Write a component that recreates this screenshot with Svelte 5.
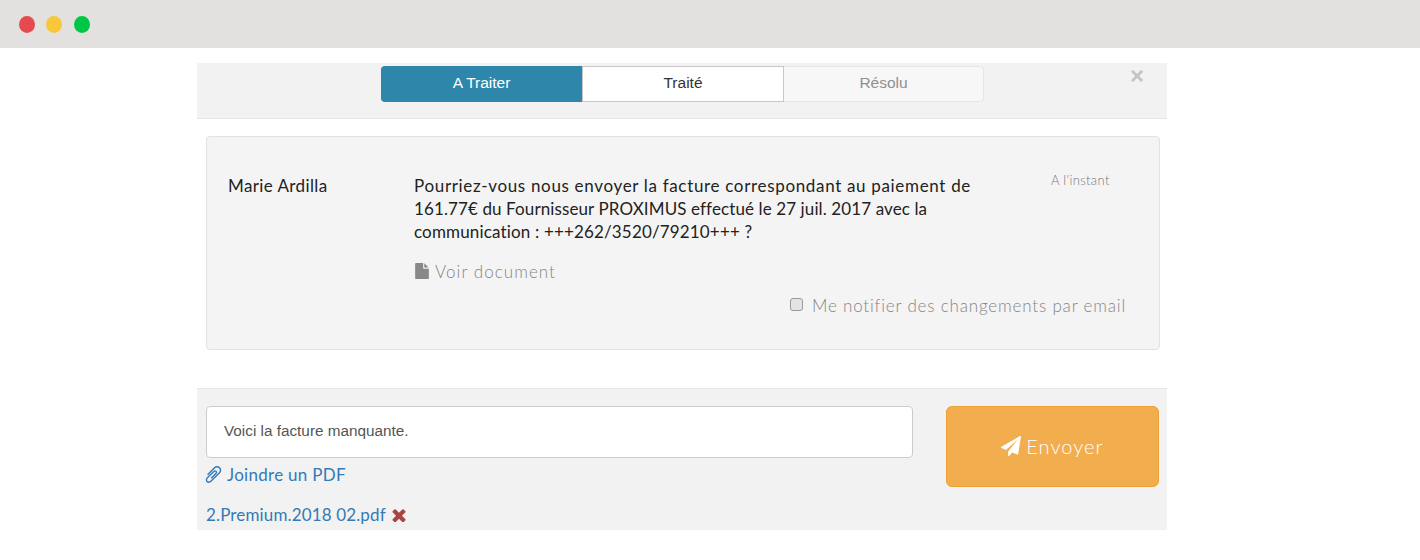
<script>
  const tabs = [
    { label: "A Traiter", kind: "active" },
    { label: "Traité", kind: "current" },
    { label: "Résolu", kind: "muted" },
  ];
  let reply = "Voici la facture manquante.";
  let notify = false;
</script>

<div class="titlebar">
  <span class="dot red"></span>
  <span class="dot yellow"></span>
  <span class="dot green"></span>
</div>

<main class="panel">
  <header class="head">
    <div class="tabs">
      {#each tabs as tab}
        <button class="tab {tab.kind}">{tab.label}</button>
      {/each}
    </div>
    <span class="close">×</span>
  </header>

  <section class="card">
    <div class="name">Marie Ardilla</div>
    <div class="body">
      <p class="msg">
        <span class="line1">Pourriez-vous nous envoyer la facture correspondant au paiement de</span>
        <span class="line2">161.77€ du Fournisseur PROXIMUS effectué le 27 juil. 2017 avec la</span>
        <span class="line3">communication : +++262/3520/79210+++ ?</span>
      </p>
      <div class="doc">
        <svg class="doc-icon" viewBox="128 0 1536 1792"><path d="M1152 512v-472q22 14 36 28l408 408q14 14 28 36h-472zm-128 32q0 40 28 68t68 28h544v1056q0 40-28 68t-68 28h-1344q-40 0-68-28t-28-68v-1600q0-40 28-68t68-28h800v544z" /></svg>
        Voir document
      </div>
    </div>
    <div class="time">A l'instant</div>
    <label class="notify">
      <input type="checkbox" bind:checked={notify} />
      <span>Me notifier des changements par email</span>
    </label>
  </section>

  <footer class="foot">
    <div class="left">
      <input class="reply" type="text" bind:value={reply} />
      <div class="attach">
        <svg class="clip" viewBox="128 128 1536 1536"><path transform="matrix(-1 0 0 1 1792 0)" d="M1596 1385q0 117-79 196t-196 79q-135 0-235-100l-777-776q-113-115-113-271 0-159 110-270t269-111q158 0 273 113l605 606q10 10 10 22 0 16-30.5 46.5t-46.5 30.5q-13 0-23-10l-606-607q-79-77-181-77-106 0-179 75t-73 181q0 105 76 181l776 777q63 63 145 63 64 0 106-42t42-106q0-82-63-145l-581-581q-26-24-60-24-29 0-48 19t-19 48q0 32 25 59l410 410q10 10 10 22 0 16-31 47t-47 31q-12 0-22-10l-410-410q-63-61-63-149 0-82 57-139t139-57q88 0 149 63l581 581q100 98 100 235z" /></svg>
        Joindre un PDF
      </div>
      <div class="file">
        2.Premium.2018 02.pdf
        <svg class="remove" viewBox="256 256 1280 1280"><path d="M1490 1322q0 40-28 68l-136 136q-28 28-68 28t-68-28l-294-294-294 294q-28 28-68 28t-68-28l-136-136q-28-28-28-68t28-68l294-294-294-294q-28-28-28-68t28-68l136-136q28-28 68-28t68 28l294 294 294-294q28-28 68-28t68 28l136 136q28 28 28 68t-28 68l-294 294 294 294q28 28 28 68z" /></svg>
      </div>
    </div>
    <button class="send">
      <svg class="plane" viewBox="0 0 1792 1792"><path d="M1764 11q33 24 27 64l-256 1536q-5 29-32 45-14 8-31 8-11 0-24-5l-453-185-242 295q-18 23-49 23-13 0-22-4-19-7-30.5-23.5t-11.5-36.5v-349l864-1059-1069 925-395-162q-37-14-40-55-2-40 32-59l1664-960q15-9 32-9 20 0 36 11z" /></svg>
      Envoyer
    </button>
  </footer>
</main>

<style>
  :global(body) {
    background: #fff;
    font-family: "Lato", "Open Sans", sans-serif;
  }

  .titlebar {
    height: 48px;
    background: #e2e1df;
    display: flex;
    align-items: center;
    padding-left: 19px;
    gap: 11px;
  }

  .dot {
    width: 16px;
    height: 17px;
    border-radius: 50%;
  }
  .red { background: #e54b4e; }
  .yellow { background: #f9c73c; }
  .green { background: #00c647; margin-left: 1px; }

  .panel {
    width: 970px;
    margin: 15px 0 0 197px;
  }

  .head {
    position: relative;
    height: 56px;
    box-sizing: border-box;
    padding-top: 3px;
    background: #f2f2f2;
    border-bottom: 1px solid #e6e6e6;
    display: flex;
    justify-content: center;
  }

  .tabs {
    display: flex;
    height: 36px;
    margin-left: 1px;
  }

  .tab {
    width: 201px;
    height: 36px;
    box-sizing: border-box;
    font-family: "Liberation Sans", sans-serif;
    font-size: 15.5px;
    padding: 0 0 2px;
  }
  .active {
    width: 202px;
    background: #2e86ab;
    color: #fff;
    border: 0;
    border-right: 1px solid #c6c6c6;
    border-radius: 4px 0 0 4px;
  }
  .current {
    background: #fff;
    color: #333;
    border: 1px solid #c8c8c8;
    border-left: 0;
  }
  .muted {
    width: 200px;
    background: #f7f7f7;
    color: #8f8f8f;
    border: 1px solid #e6e6e6;
    border-left: 0;
    border-radius: 0 4px 4px 0;
  }

  .close {
    position: absolute;
    right: 23px;
    top: 2px;
    font-family: "Liberation Sans", sans-serif;
    font-size: 24px;
    line-height: 22px;
    font-weight: 700;
    color: #c4c4c4;
  }

  .card {
    margin: 17px 7px 38px 9px;
    height: 214px;
    box-sizing: border-box;
    background: #f4f4f4;
    border: 1px solid #e2e2e2;
    border-radius: 4px;
    padding: 37px 33px 0 21px;
    display: grid;
    grid-template-columns: 186px 1fr 76px;
    align-content: start;
    color: #222;
    font-size: 17px;
  }

  .name {
    line-height: 23px;
    letter-spacing: 0.4px;
  }

  .msg {
    margin: 0;
    line-height: 23px;
  }
  .msg span { display: block; white-space: nowrap; }
  .line1 { letter-spacing: 0.67px; }
  .line2 { letter-spacing: 0.11px; }
  .line3 { letter-spacing: 0.16px; }

  .doc {
    margin-top: 17px;
    height: 23px;
    display: flex;
    align-items: center;
    gap: 6px;
    color: #858585;
    font-weight: 300;
    letter-spacing: 1.05px;
    white-space: nowrap;
  }

  .doc-icon {
    width: 14px;
    height: 16px;
    margin: -2px 0 0 1px;
    fill: #888;
  }

  .time {
    font-size: 13px;
    font-weight: 300;
    color: #777;
    line-height: 12px;
    padding-left: 1px;
    letter-spacing: 0.35px;
  }

  .notify {
    grid-column: 1 / -1;
    justify-self: end;
    margin-top: 12px;
    display: flex;
    align-items: center;
    gap: 9px;
    color: #858585;
    font-weight: 300;
    letter-spacing: 0.82px;
  }

  .notify input {
    appearance: none;
    width: 13px;
    height: 13px;
    margin: 0 0 3px;
    background: #e4e4e4;
    border: 1px solid #9a9a9a;
    border-radius: 3px;
  }

  .foot {
    height: 142px;
    box-sizing: border-box;
    background: #f2f2f2;
    border-top: 1px solid #e6e6e6;
    padding: 17px 8px 0 9px;
    display: flex;
    justify-content: space-between;
    align-items: flex-start;
  }

  .left {
    width: 707px;
    color: #337ab7;
    font-size: 17px;
  }

  .reply {
    display: block;
    width: 100%;
    height: 52px;
    box-sizing: border-box;
    border: 1px solid #ccc;
    border-radius: 4px;
    padding: 0 17px 2px;
    background: #fff;
    color: #555;
    font-family: "Liberation Sans", sans-serif;
    font-size: 15.3px;
  }

  .attach {
    margin-top: 5px;
    height: 23px;
    display: flex;
    align-items: center;
    gap: 5px;
    margin-left: -1px;
    letter-spacing: 0.29px;
  }

  .clip {
    width: 17px;
    height: 17px;
    fill: #337ab7;
  }

  .file {
    margin-top: 17px;
    height: 23px;
    display: flex;
    align-items: center;
    gap: 6px;
    letter-spacing: 0.14px;
  }

  .remove {
    width: 14px;
    height: 14px;
    fill: #a94442;
  }

  .send {
    width: 213px;
    height: 81px;
    padding: 0 0 2px;
    background: #f2ad4e;
    border: 1px solid #eea236;
    border-radius: 6px;
    color: #fff;
    font-family: "Lato", sans-serif;
    font-size: 20px;
    font-weight: 300;
    letter-spacing: 1.05px;
    display: flex;
    align-items: center;
    justify-content: center;
    gap: 5px;
  }

  .plane {
    width: 20px;
    height: 20px;
    fill: #fff;
  }
</style>
